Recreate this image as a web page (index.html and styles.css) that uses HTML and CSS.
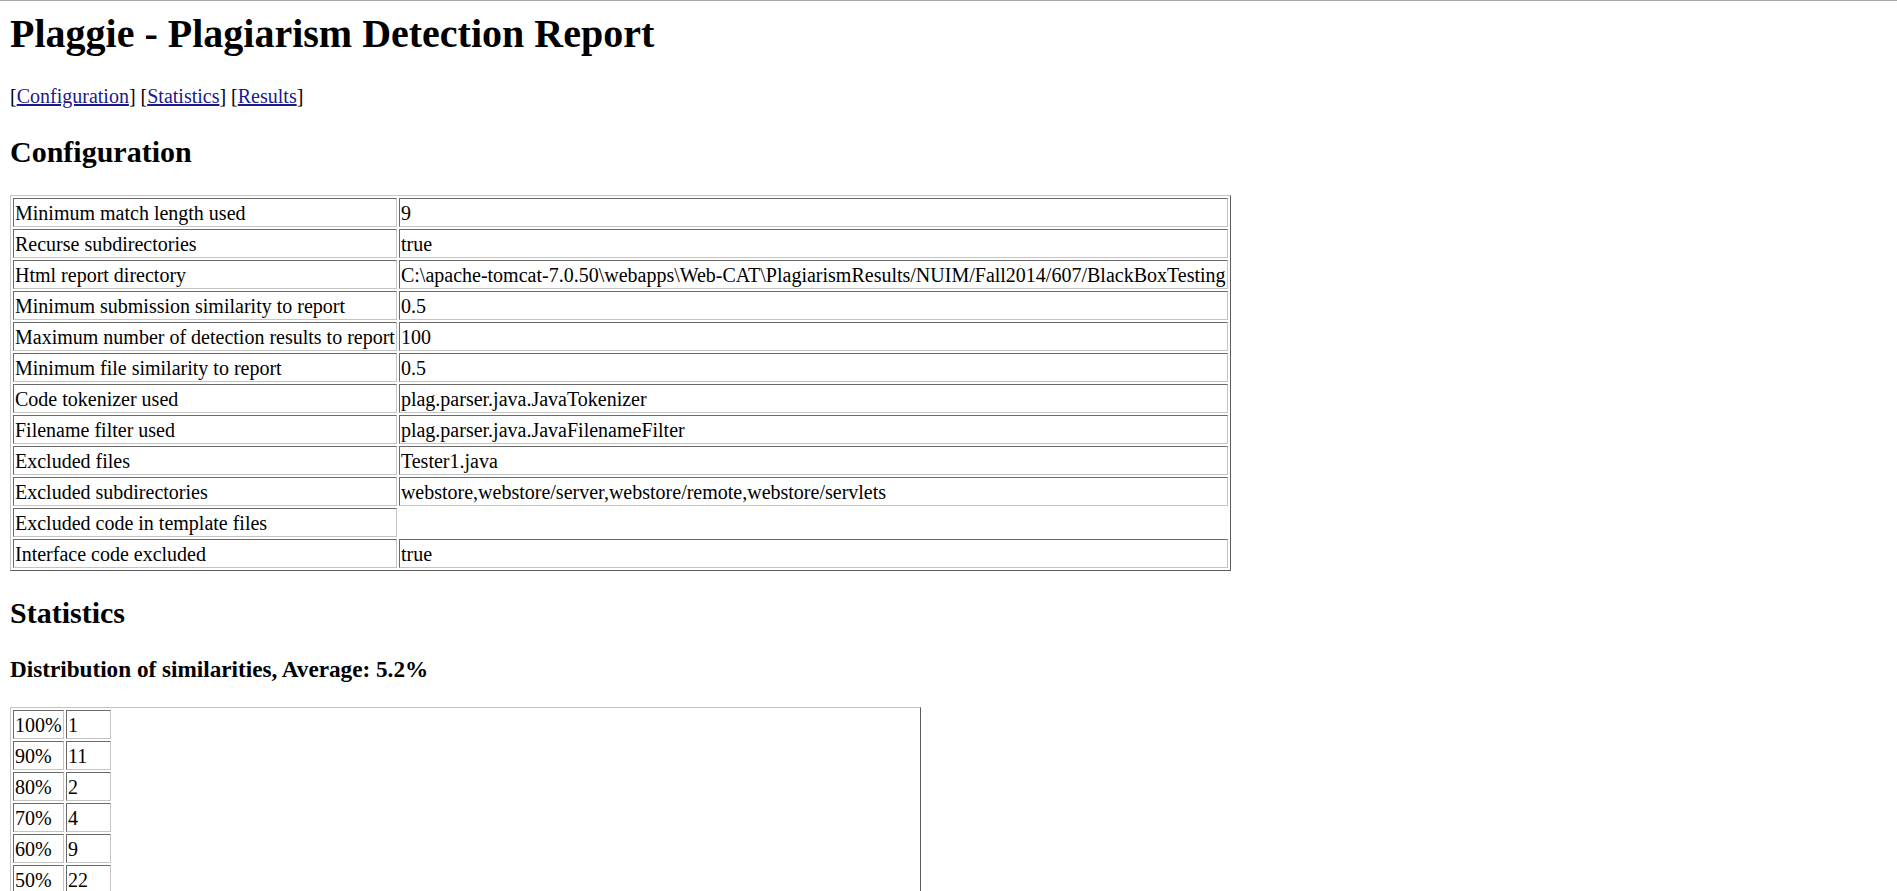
FILE: index.html
```html
<!DOCTYPE html>
<html>
<head>
<meta charset="utf-8">
<title>Plaggie - Plagiarism Detection Report</title>
<link rel="stylesheet" href="styles.css">
</head>
<body>
<h1 class="title">Plaggie - Plagiarism Detection Report</h1>
<p class="nav">[<a href="#configuration">Configuration</a>] [<a href="#statistics">Statistics</a>] [<a href="#results">Results</a>]</p>

<h2 class="section" id="configuration">Configuration</h2>
<table class="grid config">
<tr><td>Minimum match length used</td><td>9</td></tr>
<tr><td>Recurse subdirectories</td><td>true</td></tr>
<tr><td>Html report directory</td><td>C:\apache-tomcat-7.0.50\webapps\Web-CAT\PlagiarismResults/NUIM/Fall2014/607/BlackBoxTesting</td></tr>
<tr><td>Minimum submission similarity to report</td><td>0.5</td></tr>
<tr><td>Maximum number of detection results to report</td><td>100</td></tr>
<tr><td>Minimum file similarity to report</td><td>0.5</td></tr>
<tr><td>Code tokenizer used</td><td>plag.parser.java.JavaTokenizer</td></tr>
<tr><td>Filename filter used</td><td>plag.parser.java.JavaFilenameFilter</td></tr>
<tr><td>Excluded files</td><td>Tester1.java</td></tr>
<tr><td>Excluded subdirectories</td><td>webstore,webstore/server,webstore/remote,webstore/servlets</td></tr>
<tr><td>Excluded code in template files</td><td></td></tr>
<tr><td>Interface code excluded</td><td>true</td></tr>
</table>

<h2 class="section" id="statistics">Statistics</h2>
<h3 class="subsection">Distribution of similarities, Average: 5.2%</h3>
<table class="grid dist">
<tr><td class="pct">100%</td><td class="cnt">1</td><td class="bar"></td></tr>
<tr><td class="pct">90%</td><td class="cnt">11</td><td class="bar"></td></tr>
<tr><td class="pct">80%</td><td class="cnt">2</td><td class="bar"></td></tr>
<tr><td class="pct">70%</td><td class="cnt">4</td><td class="bar"></td></tr>
<tr><td class="pct">60%</td><td class="cnt">9</td><td class="bar"></td></tr>
<tr><td class="pct">50%</td><td class="cnt">22</td><td class="bar"></td></tr>
</table>
</body>
</html>
```
FILE: styles.css
```css
html {
  border-top: 1px solid #a8a8a8;
  background: #ffffff;
}
body {
  margin: 10px;
  font-family: "Liberation Serif", "Times New Roman", serif;
  font-size: 20px;
  color: #000000;
  background: #ffffff;
}
.title {
  font-size: 40px;
  line-height: 46px;
  font-weight: bold;
  margin: 0 0 28px 0;
}
.nav {
  line-height: 23px;
  margin: 0 0 26px 0;
}
.nav a {
  color: #1a1a8c;
  text-decoration: underline;
}
.section {
  font-size: 30px;
  line-height: 35px;
  font-weight: bold;
  margin: 24px 0 26px 0;
}
.subsection {
  font-size: 23.2px;
  line-height: 27px;
  font-weight: bold;
  margin: 24px 0 24px 0;
}
.grid {
  border-collapse: separate;
  border-spacing: 2px;
  border-style: solid;
  border-width: 1px;
  border-color: #c4c4c4 #5c5c5c #5c5c5c #c4c4c4;
  empty-cells: hide;
}
.grid td {
  padding: 2px 1px 0 1px;
  line-height: 25px;
  border-style: solid;
  border-width: 1px;
  border-color: #6a6a6a #c4c4c4 #c4c4c4 #6a6a6a;
  white-space: nowrap;
  vertical-align: middle;
  text-align: left;
}
.dist {
  width: 911px;
}
.dist .pct {
  width: 47px;
}
.dist .cnt {
  width: 41px;
}
.dist .bar {
  border: none;
}
```
